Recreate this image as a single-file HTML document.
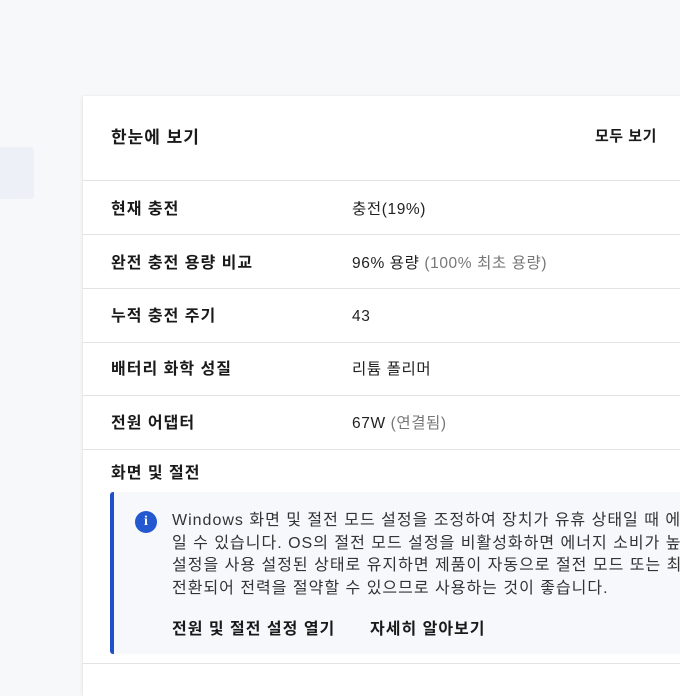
<!DOCTYPE html>
<html><head><meta charset="utf-8"><style>
*{margin:0;padding:0;box-sizing:border-box}
body{width:680px;height:680px;overflow:hidden;background:#f7f8fa;font-family:"Liberation Sans","Noto Sans CJK KR",sans-serif;color:#1a1a1a;position:relative}
.sel{position:absolute;left:0;top:147px;width:34px;height:52px;background:#eef0f7;border-radius:0 4px 4px 0}
.card{position:absolute;left:83px;top:96px;width:620px;height:600px;background:#fff;box-shadow:-1px 0 3px rgba(0,0,0,.08)}
.t{position:absolute;font-size:16px;letter-spacing:1px;font-weight:bold;white-space:nowrap}
.v{position:absolute;left:352px;font-size:15.5px;letter-spacing:0.6px;white-space:nowrap;color:#222}
.g{color:#777}
.ln{position:absolute;left:83px;width:600px;height:1px;background:#e3e3e3}
.box{position:absolute;left:110px;top:492px;width:600px;height:162px;background:#f6f8fb;border-left:4px solid #2050c8;border-radius:3px}
.ic{position:absolute;left:135px;top:511px;width:22px;height:22px;border-radius:50%;background:#2358d0;color:#fff;font:bold 14px "Liberation Serif",serif;text-align:center;line-height:22px}
.p{position:absolute;left:172px;top:510px;font-size:16px;letter-spacing:1px;line-height:22.5px;color:#333;white-space:nowrap}
</style></head><body>
<div class="sel"></div>
<div class="card"></div>
<div class="t" style="left:111px;top:123px;font-size:17px">한눈에 보기</div>
<div class="t" style="left:595px;top:125px;font-size:15px;letter-spacing:0.5px">모두 보기</div>
<div class="ln" style="top:180px"></div>
<div class="t" style="left:111px;top:195px">현재 충전</div><div class="v" style="top:197px">충전(19%)</div>
<div class="ln" style="top:234px"></div>
<div class="t" style="left:111px;top:249px">완전 충전 용량 비교</div><div class="v" style="top:251px">96% 용량 <span class="g">(100% 최초 용량)</span></div>
<div class="ln" style="top:288px"></div>
<div class="t" style="left:111px;top:302px">누적 충전 주기</div><div class="v" style="top:308px">43</div>
<div class="ln" style="top:342px"></div>
<div class="t" style="left:111px;top:355px">배터리 화학 성질</div><div class="v" style="top:357px">리튬 폴리머</div>
<div class="ln" style="top:395px"></div>
<div class="t" style="left:111px;top:409px">전원 어댑터</div><div class="v" style="top:411px">67W <span class="g">(연결됨)</span></div>
<div class="ln" style="top:449px"></div>
<div class="t" style="left:111px;top:459px">화면 및 절전</div>
<div class="box"></div>
<div class="ic">i</div>
<div class="p">Windows 화면 및 절전 모드 설정을 조정하여 장치가 유휴 상태일 때 에너지<br>일 수 있습니다. OS의 절전 모드 설정을 비활성화하면 에너지 소비가 높아<br>설정을 사용 설정된 상태로 유지하면 제품이 자동으로 절전 모드 또는 최대<br>전환되어 전력을 절약할 수 있으므로 사용하는 것이 좋습니다.</div>
<div class="t" style="left:172px;top:615px">전원 및 절전 설정 열기</div>
<div class="t" style="left:370px;top:615px">자세히 알아보기</div>
<div class="ln" style="top:663px"></div>
</body></html>
